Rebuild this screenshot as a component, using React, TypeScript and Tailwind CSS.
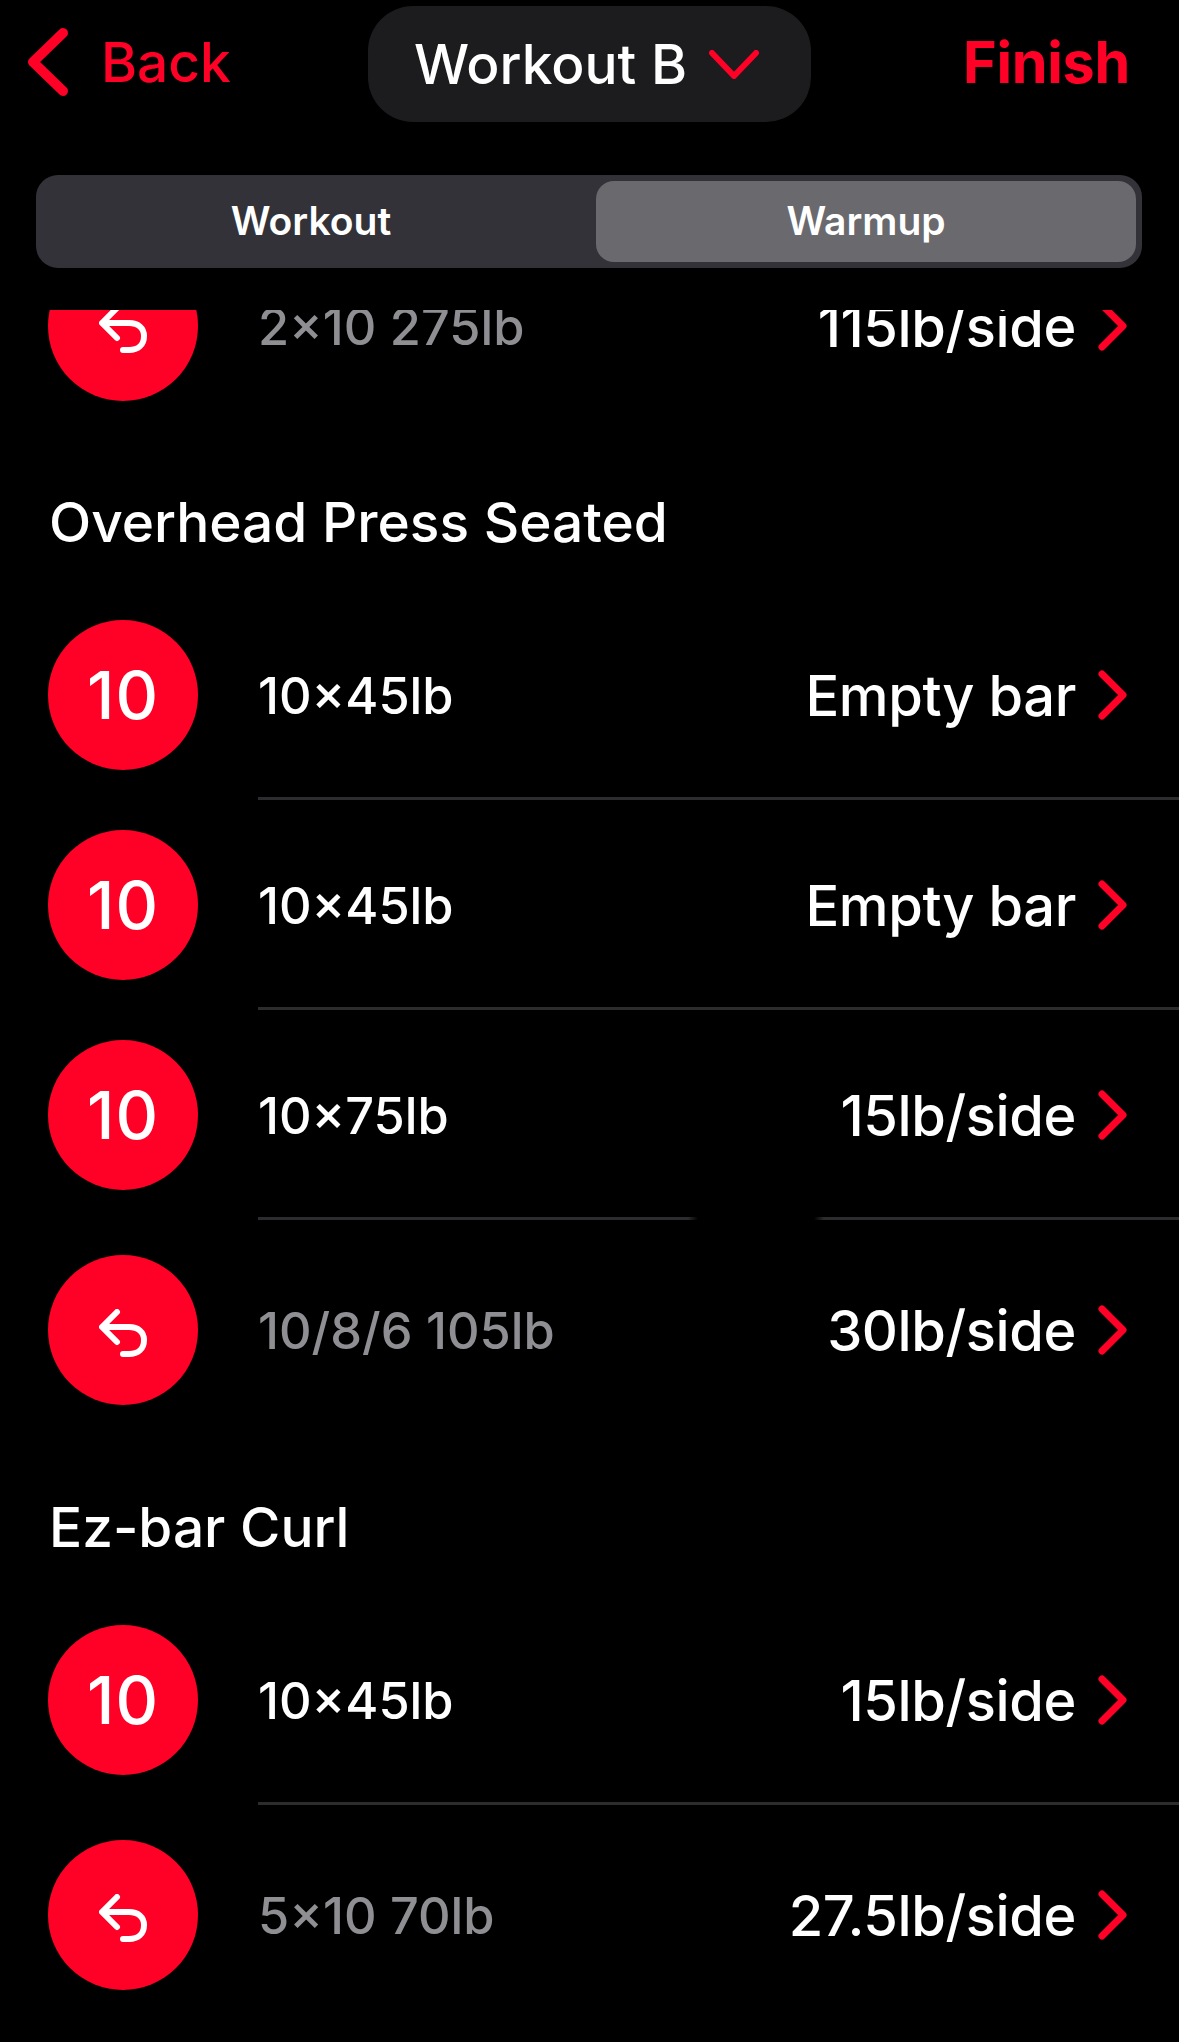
function Chevron() {
  return (
    <svg width="30" height="50" viewBox="0 0 30 50" className="ml-[22px] shrink-0" fill="none" stroke="#ff0026" strokeWidth="7" strokeLinecap="round" strokeLinejoin="round">
      <path d="M4 4 L25 25 L4 46" />
    </svg>
  );
}

function Undo() {
  return (
    <svg width="48" height="48" viewBox="0 0 48 48" className="mt-[6px]" fill="none" stroke="white" strokeWidth="6" strokeLinecap="round" strokeLinejoin="round">
      <path d="M18 3 L3 18 L18 33" />
      <path d="M4 18 H30 C39 18 45 23 45 31 C45 40 39 45 30 45 H24" />
    </svg>
  );
}

type RowData = { n?: string; left: string; right: string; line?: boolean; tall?: boolean; fade?: boolean };

function Row({ n, left, right, line, tall, fade }: RowData) {
  return (
    <div className={tall ? "pt-[35px]" : "pt-[30px]"}>
      <div className="flex items-center h-[150px] pl-[48px] pr-[51px]">
        <div className="w-[150px] h-[150px] rounded-full bg-[#ff0026] flex items-center justify-center text-white text-[66px] font-[530] tracking-[1px] shrink-0">
          {n ? n : <Undo />}
        </div>
        <div className={"ml-[60px] pt-[2px] text-[50.5px] font-[540] flex-1 " + (n ? "text-white" : "text-[#8e8e93]")}>{left}</div>
        <div className="pt-[1px] text-[56px] font-[540] tracking-[-0.4px] text-white">{right}</div>
        <Chevron />
      </div>
      {line ? (
        <div
          className={
            "ml-[258px] mt-[27px] h-[3px] " +
            (fade
              ? "bg-[linear-gradient(90deg,#2c2c2e_430px,#000_440px,#000_556px,#2c2c2e_566px)]"
              : "bg-[#2c2c2e]")
          }
        />
      ) : null}
    </div>
  );
}

export default function App() {
  return (
    <div className="w-[1179px] h-[2042px] bg-black overflow-hidden font-['Inter',sans-serif] flex flex-col">
      <div className="flex items-center h-[116px] mt-[6px] mb-[6px] pl-[26px] pr-[49px] shrink-0">
        <div className="flex items-center w-[342px] mb-[4px] shrink-0">
          <svg width="44" height="68" viewBox="0 0 44 68" fill="none" stroke="#ff0026" strokeWidth="10" strokeLinecap="round" strokeLinejoin="round">
            <path d="M37 5 L7 34 L37 63" />
          </svg>
          <span className="ml-[31px] text-[55px] font-[530] text-[#ff0026]">Back</span>
        </div>
        <div className="flex items-center justify-center w-[443px] h-[116px] pr-[6px] rounded-[45px] bg-[#1c1c1e] shrink-0">
          <span className="text-[55px] font-[530] text-white">Workout B</span>
          <svg className="ml-[22px]" width="50" height="29" viewBox="0 0 50 29" fill="none" stroke="#ff0026" strokeWidth="6" strokeLinecap="round" strokeLinejoin="round">
            <path d="M3 3 L25 26 L47 3" />
          </svg>
        </div>
        <div className="flex-1 mb-[4px] text-right text-[57.5px] font-[750] tracking-[-0.3px] text-[#ff0026]">Finish</div>
      </div>

      <div className="ml-[36px] mr-[37px] mt-[47px] h-[93px] rounded-[22px] bg-[#323238] flex p-[6px] shrink-0">
        <div className="flex-1 flex items-center justify-center pr-[16px] text-[39px] font-semibold text-white">Workout</div>
        <div className="w-[540px] rounded-[18px] bg-[#69696e] flex items-center justify-center text-[39px] font-semibold text-white">Warmup</div>
      </div>

      <div className="mt-[42px] flex-1 overflow-hidden">
        <div className="-mt-[89px]">
          <Row left="2×10 275lb" right="115lb/side" />
          <h2 className="mt-[86px] pl-[49px] text-[55px] leading-[70px] font-[530] text-white">Overhead Press Seated</h2>
          <div className="mt-[33px]" />
          <Row n="10" left="10×45lb" right="Empty bar" line />
          <Row n="10" left="10×45lb" right="Empty bar" line />
          <Row n="10" left="10×75lb" right="15lb/side" line fade />
          <Row left="10/8/6 105lb" right="30lb/side" tall />
          <h2 className="mt-[87px] pl-[49px] text-[55px] leading-[70px] font-[530] text-white">Ez-bar Curl</h2>
          <div className="mt-[33px]" />
          <Row n="10" left="10×45lb" right="15lb/side" line />
          <Row left="5×10 70lb" right="27.5lb/side" tall />
        </div>
      </div>
    </div>
  );
}
